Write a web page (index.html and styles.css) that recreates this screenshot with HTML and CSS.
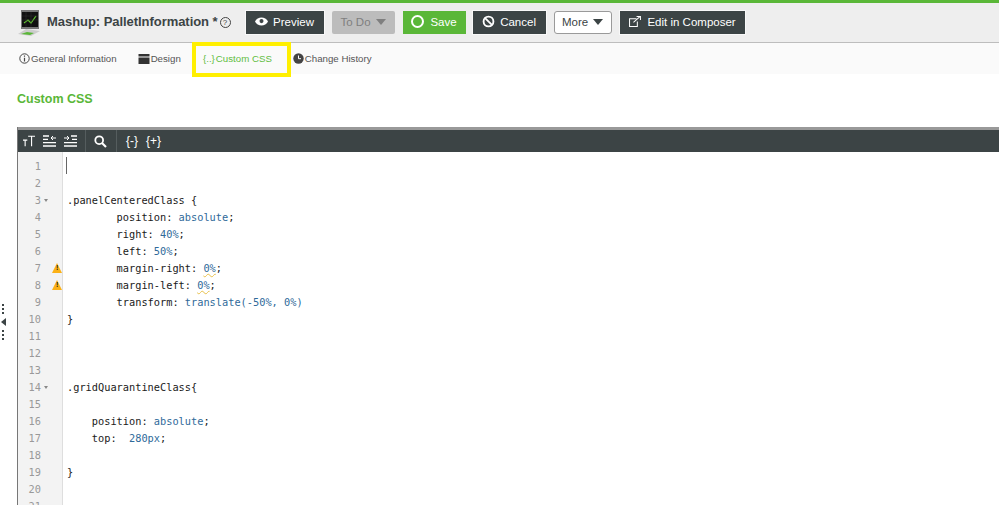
FILE: index.html
```html
<!DOCTYPE html>
<html lang="en">
<head>
<meta charset="utf-8">
<title>Mashup: PalletInformation</title>
<link rel="stylesheet" href="styles.css">
</head>
<body>
<header class="topbar">
  <svg class="logo" width="24" height="28" viewBox="0 0 24 28">
    <path d="M3 1h18v19H3z" fill="#777"/>
    <path d="M4 3h16v15H4z" fill="#111"/>
    <path d="M6 14l4-3 3 3 5-7" fill="none" stroke="#6c3" stroke-width="1.200"/>
    <path d="M4 7h16M4 11h16M8 3v15M13 3v15" stroke="#333" stroke-width=".5"/>
    <path d="M0 25l8-5 14 2-9 5z" fill="#ccc"/>
    <path d="M3 25l6-2 7 1-4 2z" fill="#5ab738"/>
  </svg>
  <h1 class="title">Mashup: PalletInformation *</h1>
  <span class="help">?</span>
  <button class="btn dark preview">
    <svg width="13" height="9" viewBox="0 0 16 10"><path d="M0 5c3-6.500 13-6.500 16 0-3 6.500-13 6.500-16 0z" fill="#fff"/><circle cx="8" cy="4.500" r="2.500" fill="#3c4445"/></svg>
    Preview
  </button>
  <button class="btn disabled todo">To Do <i class="caret grey"></i></button>
  <button class="btn green save"><i class="ring"></i>Save</button>
  <button class="btn dark cancel">
    <svg width="13" height="13" viewBox="0 0 14 14"><circle cx="7" cy="7" r="5.300" fill="none" stroke="#fff" stroke-width="2"/><path d="M3.300 3.300l7.400 7.400" stroke="#fff" stroke-width="2"/></svg>
    Cancel
  </button>
  <button class="btn light more">More <i class="caret"></i></button>
  <button class="btn dark edit">
    <svg width="14" height="13" viewBox="0 0 18 16"><path d="M11 4.500H2v10h10V8" fill="none" stroke="#fff" stroke-width="1.300"/><path d="M7 9l8-7M11 1.500h5V6" fill="none" stroke="#fff" stroke-width="1.300"/></svg>
    Edit in Composer
  </button>
</header>

<nav class="tabs">
  <a class="tab tab-general">
    <svg width="11" height="11" viewBox="0 0 11 11"><circle cx="5.500" cy="5.500" r="4.700" fill="none" stroke="#444"/><path d="M5.500 4.800v3.600M5.500 2.500v1.200" stroke="#444" stroke-width="1.200"/></svg>General Information
  </a>
  <a class="tab tab-design">
    <svg width="12" height="10" viewBox="0 0 11 10"><path d="M0 0h11v2.500H0z" fill="#333"/><path d="M0 3.500h11V10H0z" fill="#333"/></svg>Design
  </a>
  <a class="tab tab-css"><span class="brace">{..}</span>Custom CSS</a>
  <a class="tab tab-history">
    <svg width="11" height="11" viewBox="0 0 11 11"><circle cx="5.500" cy="5.500" r="5.200" fill="#444"/><path d="M5.500 2.500v3.200h2.500" fill="none" stroke="#fff"/></svg>Change History
  </a>
</nav>

<h2 class="section-title">Custom CSS</h2>

<div class="handle">
  <span class="dots"></span>
  <i class="handle-arrow"></i>
  <span class="dots"></span>
</div>

<section class="editor">
  <div class="toolbar">
    <div class="tool-group first">
      <svg width="12" height="14" viewBox="0 0 14 14"><path d="M0 6h5M2.500 6v7M6 1.500h8M10 1.500V13" fill="none" stroke="#fff" stroke-width="1.300"/></svg>
      <svg width="13" height="12" viewBox="0 0 13 12"><path d="M0 1h6M0 4.300h5M0 7.700h13M0 11h13" stroke="#fff" stroke-width="1.300"/><path d="M13 3H8M10 1L8 3l2 2" fill="none" stroke="#fff"/></svg>
      <svg width="13" height="12" viewBox="0 0 13 12"><path d="M7 1h6M8 4.300h5M0 7.700h13M0 11h13" stroke="#fff" stroke-width="1.300"/><path d="M0 3h5M3 1l2 2-2 2" fill="none" stroke="#fff"/></svg>
    </div>
    <div class="tool-group search">
      <svg width="13" height="13" viewBox="0 0 13 13"><circle cx="5.200" cy="5.200" r="3.900" fill="none" stroke="#fff" stroke-width="1.800"/><path d="M8 8l4 4" stroke="#fff" stroke-width="2.200"/></svg>
    </div>
    <div class="tool-group braces">
      <span>{-}</span><span>{+}</span>
    </div>
  </div>
  <div class="code-area">
    <div class="gutter">
      <div class="gl">1</div>
      <div class="gl">2</div>
      <div class="gl fold">3</div>
      <div class="gl">4</div>
      <div class="gl">5</div>
      <div class="gl">6</div>
      <div class="gl warn">7</div>
      <div class="gl warn">8</div>
      <div class="gl">9</div>
      <div class="gl">10</div>
      <div class="gl">11</div>
      <div class="gl">12</div>
      <div class="gl">13</div>
      <div class="gl fold">14</div>
      <div class="gl">15</div>
      <div class="gl">16</div>
      <div class="gl">17</div>
      <div class="gl">18</div>
      <div class="gl">19</div>
      <div class="gl">20</div>
      <div class="gl">21</div>
    </div>
    <pre class="code"><span class="cursor"></span>

.panelCenteredClass {
        position: <b>absolute</b>;
        right: <b>40%</b>;
        left: <b>50%</b>;
        margin-right: <b class="sq">0%</b>;
        margin-left: <b class="sq">0%</b>;
        transform: <b>translate(-50%, 0%)</b>
}



.gridQuarantineClass{

    position: <b>absolute</b>;
    top:  <b>280px</b>;

}

</pre>
  </div>
</section>
</body>
</html>
```
FILE: styles.css
```css
* { box-sizing: border-box; }
html, body { margin: 0; height: 506px; overflow: hidden; background: #fff; }
body { font-family: "Liberation Sans", Arial, sans-serif; position: relative; }

.topbar {
  height: 43px;
  border-top: 3px solid #5ab738;
  border-bottom: 1px solid #bdbdbd;
  background: #eeeeee;
  display: flex;
  align-items: center;
  padding-left: 18px;
}
.logo { margin-right: 5px; margin-top: 1px; flex: none; }
.title { margin: 0 0 2px; font-size: 13px; font-weight: bold; letter-spacing: -0.05px; color: #3c4445; white-space: nowrap; }
.help {
  width: 11px; height: 11px; margin: 0 0 0 2px;
  border: 1px solid #444; border-radius: 50%;
  font-size: 8px; line-height: 9px; text-align: center; color: #444;
}
.btn {
  height: 23px;
  margin: 0;
  padding: 0 0 2px;
  border: 0;
  display: flex;
  align-items: center;
  justify-content: center;
  gap: 5px;
  font: 11.5px "Liberation Sans", Arial, sans-serif;
  white-space: nowrap;
}
.dark { background: #3c4445; color: #fff; box-shadow: 0 0 0 1px #f8f8f8; }
.green { background: #5ab738; color: #fff; }
.disabled { background: #bcbcbc; color: #7f7f7f; border-radius: 2px; }
.light { background: #fff; color: #3c4445; border: 1px solid #9a9a9a; border-radius: 3px; }
.preview { width: 78px; margin-left: 15px; }
.todo { width: 63px; margin-left: 8px; }
.save { width: 63px; margin-left: 8px; gap: 6px; }
.cancel { width: 73px; margin-left: 7px; }
.more { width: 58px; margin-left: 8px; }
.edit { width: 125px; margin-left: 8px; }
.caret {
  width: 0; height: 0;
  border-left: 5px solid transparent;
  border-right: 5px solid transparent;
  border-top: 6px solid #3c4445;
}
.caret.grey { border-top-color: #7f7f7f; }
.ring { width: 13px; height: 13px; border: 2px solid #fff; border-radius: 50%; }

.tabs {
  height: 31px;
  background: #fafafa;
  position: relative;
  font-size: 9.7px;
  color: #555;
  display: flex;
  align-items: center;
  padding-left: 19px;
}
.tab { display: flex; align-items: center; gap: 1px; white-space: nowrap; }
.tab-design { margin-left: 21px; }
.tab-css {
  position: absolute;
  left: 192px; top: -1px;
  width: 99px; height: 35px;
  border: 4px solid #ffef00;
  padding: 0 0 2px 7px;
  color: #62bd3f;
}
.brace { margin-right: 0; }
.tab-history { margin-left: 112px; }

.section-title {
  margin: 18px 0 0 17px;
  font-size: 12.5px;
  line-height: 15px;
  font-weight: bold;
  color: #5ab738;
}

.handle {
  position: absolute;
  left: 0; top: 303px;
  width: 6px;
  display: flex;
  flex-direction: column;
  align-items: center;
  gap: 3px;
}
.dots {
  width: 2px; height: 12px;
  background: radial-gradient(circle, #3c4445 1px, transparent 1px) 0 0 / 2px 4px;
}
.handle-arrow {
  width: 0; height: 0;
  border-top: 4px solid transparent;
  border-bottom: 4px solid transparent;
  border-right: 5px solid #3c4445;
}

.editor {
  margin: 20px 0 0 17px;
  border-left: 1px solid #777;
  height: 378px;
  overflow: hidden;
}
.toolbar {
  height: 25px;
  border-top: 3px solid #999;
  background: #3c4445;
  display: flex;
  align-items: center;
}
.tool-group {
  height: 22px;
  display: flex;
  align-items: center;
  gap: 8px;
  padding: 0 8px 0 5px;
  border-right: 1px solid #555d5e;
}
.tool-group.search { padding: 0 9px 0 8px; }
.braces { border-right: 0; gap: 8px; color: #fff; font: 12px "Liberation Sans", sans-serif; padding-left: 9px; }

.code-area { display: flex; }
.gutter {
  width: 45px;
  background: #f3f3f3;
  border-right: 1px solid #dedede;
  padding-top: 6px;
  flex: none;
}
.gl {
  height: 17px;
  width: 23px;
  text-align: right;
  font: 10.3px/17px "DejaVu Sans Mono", monospace;
  color: #999;
  position: relative;
}
.fold::after {
  content: "";
  position: absolute;
  left: 26px; top: 7px;
  border-left: 2px solid transparent;
  border-right: 2px solid transparent;
  border-top: 3px solid #888;
}
.warn::before {
  content: "!";
  position: absolute;
  left: 34px; top: 3px;
  width: 0; height: 0;
  border-left: 5px solid transparent;
  border-right: 5px solid transparent;
  border-bottom: 10px solid #fbb117;
  font: bold 7px/10px "Liberation Sans", sans-serif;
  color: #222;
  text-indent: -1px;
}
.code {
  margin: 0;
  padding: 6px 0 0 4px;
  font: 10.3px/17px "DejaVu Sans Mono", monospace;
  color: #1a1a1a;
  position: relative;
}
.code b { font-weight: normal; color: #2f6a9a; }
.sq { text-decoration: underline wavy #e8c04a 1px; text-underline-offset: 1px; }
.cursor {
  position: absolute;
  left: 3px; top: 5px;
  width: 1px; height: 17px;
  background: #666;
}
```
